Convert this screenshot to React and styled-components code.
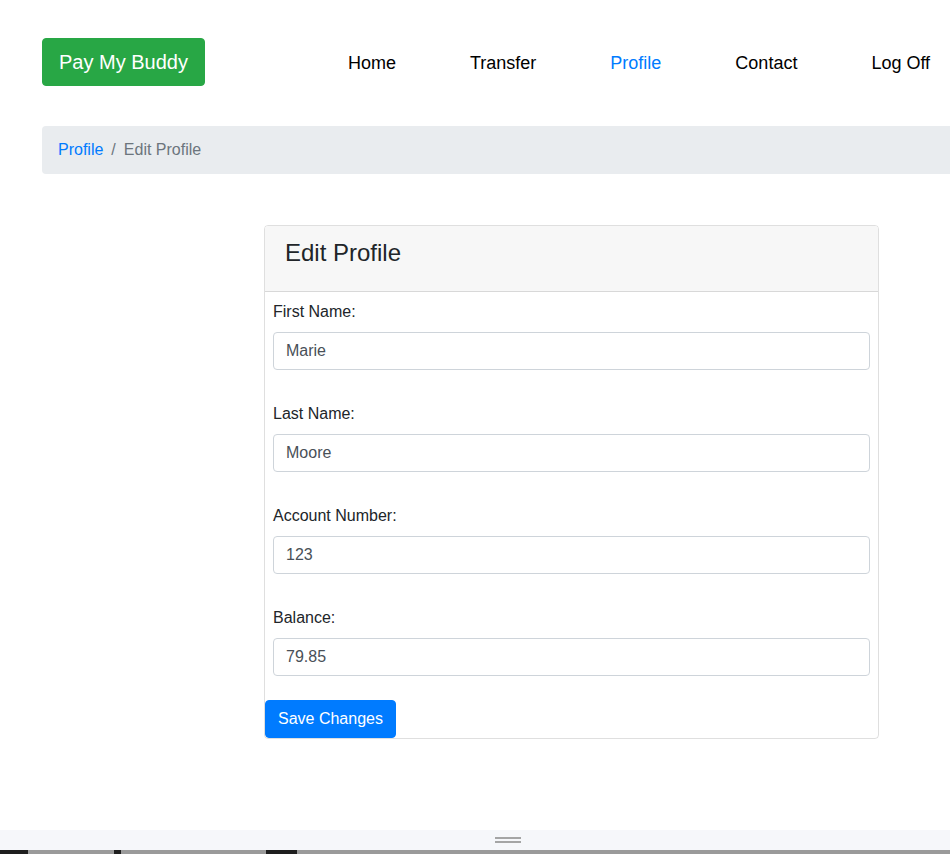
import React, { useState } from "react";
import styled, { createGlobalStyle } from "styled-components";

const GlobalStyle = createGlobalStyle`
  html, body {
    margin: 0;
    padding: 0;
    overflow-x: hidden;
  }
  body {
    font-family: "Liberation Sans", Arial, sans-serif;
    color: #212529;
    background: #fff;
  }
  * { box-sizing: border-box; }
`;

const navLinks = ["Home", "Transfer", "Profile", "Contact", "Log Off"];

const App = () => {
  const [form, setForm] = useState({
    firstName: "Marie",
    lastName: "Moore",
    accountNumber: "123",
    balance: "79.85",
  });

  const fields = [
    { key: "firstName", label: "First Name:" },
    { key: "lastName", label: "Last Name:" },
    { key: "accountNumber", label: "Account Number:" },
    { key: "balance", label: "Balance:" },
  ];

  return (
    <Page>
      <GlobalStyle />
      <Content>
        <Header>
          <Brand href="#">Pay My Buddy</Brand>
          <Nav>
            {navLinks.map((link) => (
              <NavLink key={link} href="#" active={link === "Profile"}>
                {link}
              </NavLink>
            ))}
          </Nav>
        </Header>

        <Breadcrumb>
          <Crumb href="#">Profile</Crumb>
          <Divider>/</Divider>
          <CurrentCrumb>Edit Profile</CurrentCrumb>
        </Breadcrumb>

        <Card>
          <CardHeader>
            <CardTitle>Edit Profile</CardTitle>
          </CardHeader>
          <CardBody>
            {fields.map((f) => (
              <FormGroup key={f.key}>
                <Label htmlFor={f.key}>{f.label}</Label>
                <Input
                  id={f.key}
                  value={form[f.key]}
                  onChange={(e) => setForm({ ...form, [f.key]: e.target.value })}
                />
              </FormGroup>
            ))}
          </CardBody>
          <SaveButton type="button">Save Changes</SaveButton>
        </Card>
      </Content>

      <BottomBar>
        <Handle />
      </BottomBar>
      <Strip>
        <StripBlock w={28} dark />
        <StripBlock w={86} />
        <StripBlock w={7} dark />
        <StripBlock w={145} />
        <StripBlock w={31} dark />
        <StripBlock grow />
      </Strip>
    </Page>
  );
};

const Page = styled.div`
  min-height: 100vh;
  display: flex;
  flex-direction: column;
`;

const Content = styled.div`
  flex: 1;
  width: 1100px;
  padding: 38px 0 0 42px;
`;

const Header = styled.div`
  display: flex;
  align-items: center;
  height: 48px;
`;

const Brand = styled.a`
  display: inline-block;
  background-color: #28a745;
  color: #fff;
  text-decoration: none;
  font-size: 20px;
  line-height: 30px;
  padding: 8px 16px;
  border: 1px solid #28a745;
  border-radius: 4px;
`;

const Nav = styled.nav`
  display: flex;
  gap: 74px;
  margin-left: 143px;
  padding-top: 2px;
`;

const NavLink = styled.a`
  font-size: 18px;
  color: ${(props) => (props.active ? "#007bff" : "#000")};
  text-decoration: none;
`;

const Breadcrumb = styled.div`
  display: flex;
  align-items: center;
  margin-top: 40px;
  height: 48px;
  padding: 0 16px;
  background-color: #e9ecef;
  border-radius: 4px;
  font-size: 16px;
`;

const Crumb = styled.a`
  color: #007bff;
  text-decoration: none;
`;

const Divider = styled.span`
  color: #6c757d;
  padding: 0 8px;
`;

const CurrentCrumb = styled.span`
  color: #6c757d;
`;

const Card = styled.div`
  margin: 51px 0 0 222px;
  width: 615px;
  border: 1px solid rgba(0, 0, 0, 0.125);
  border-radius: 4px;
  overflow: hidden;
`;

const CardHeader = styled.div`
  background-color: #f7f7f7;
  border-bottom: 1px solid rgba(0, 0, 0, 0.125);
  padding: 12px 20px 24px 20px;
`;

const CardTitle = styled.h3`
  margin: 0;
  font-size: 24px;
  font-weight: 500;
  line-height: 29px;
  color: #212529;
`;

const CardBody = styled.div`
  padding: 8px;
  display: flex;
  flex-direction: column;
  gap: 32px;
`;

const FormGroup = styled.div`
  display: flex;
  flex-direction: column;

  &:last-child {
    margin-bottom: 16px;
  }
`;

const Label = styled.label`
  font-size: 16px;
  line-height: 24px;
  margin-bottom: 8px;
  color: #212529;
`;

const Input = styled.input`
  height: 38px;
  padding: 6px 12px;
  font-family: inherit;
  font-size: 16px;
  color: #495057;
  border: 1px solid #ced4da;
  border-radius: 4px;
  outline: none;
`;

const SaveButton = styled.button`
  display: block;
  height: 38px;
  padding: 6px 12px;
  font-family: inherit;
  font-size: 16px;
  line-height: 24px;
  color: #fff;
  background-color: #007bff;
  border: 1px solid #007bff;
  border-radius: 4px;
  cursor: pointer;
`;

const BottomBar = styled.div`
  height: 20px;
  background-color: #f6f7fa;
  display: flex;
  align-items: center;
  justify-content: center;
  padding-left: 66px;
`;

const Handle = styled.div`
  width: 26px;
  height: 6px;
  border-top: 2px solid #a5a5a5;
  border-bottom: 2px solid #a5a5a5;
`;

const Strip = styled.div`
  display: flex;
  height: 4px;
`;

const StripBlock = styled.div`
  width: ${(props) => (props.w ? `${props.w}px` : "auto")};
  flex: ${(props) => (props.grow ? 1 : "none")};
  background-color: ${(props) => (props.dark ? "#1e1e1e" : "#9a9a9a")};
`;

export default App;
